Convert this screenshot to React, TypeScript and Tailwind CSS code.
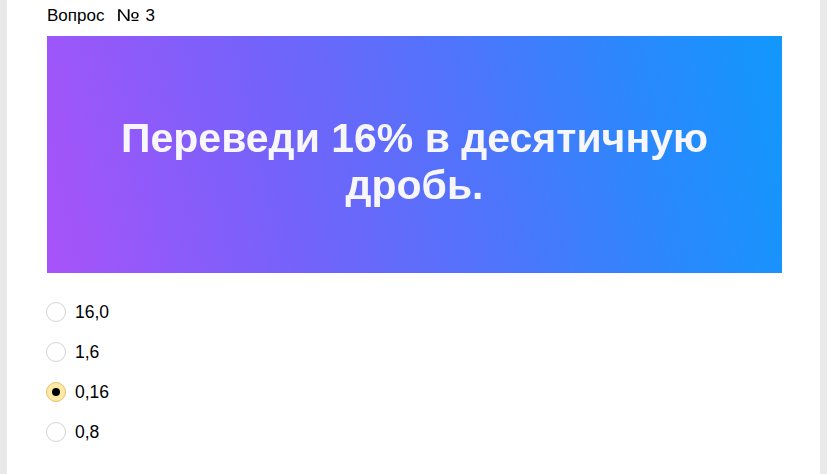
import React, { useState } from 'react';

const options = ['16,0', '1,6', '0,16', '0,8'];

const App: React.FC = () => {
  const [selected, setSelected] = useState(2);

  return (
    <div className="flex h-[474px] w-full bg-[#e9e9e9] font-['Liberation_Sans',Arial,sans-serif]">
      <div className="ml-[7px] h-full w-[813px] bg-white pl-[40px] pt-[5px]">
        <h1 className="h-[22px] text-[17px] leading-[22px] text-black">
          Вопрос
          <span className="ml-[12px] mr-[5px] inline-block w-[24px] leading-[22px]">
            <span className="inline-block origin-left scale-x-[1.3]">№</span>
          </span>
          3
        </h1>

        {/* question picture */}
        <div className="mt-[9px] flex h-[237px] w-[735px] items-center justify-center bg-[linear-gradient(78deg,#a853f9_0%,#7562fa_32%,#4f74fb_58%,#2b88fc_80%,#1198fd_100%)] pt-[14px]">
          <p className="text-center text-[41px] font-bold leading-[47px] text-[#f6f6fb] blur-[0.4px]">
            Переведи 16% в десятичную
            <br />
            дробь.
          </p>
        </div>

        <div className="mt-[19px] flex flex-col">
          {options.map((o, i) => (
            <label key={o} className="flex h-[40px] cursor-pointer items-center gap-[9px]" onClick={() => setSelected(i)}>
              <span
                className={
                  i === selected
                    ? 'ml-[-1px] flex h-[20px] w-[20px] items-center justify-center rounded-full border border-[#e2c46c] bg-[#fde8a6]'
                    : 'ml-[-1px] flex h-[20px] w-[20px] items-center justify-center rounded-full border border-[#d3d3d3] bg-white'
                }
              >
                {i === selected && <span className="h-[8px] w-[8px] rounded-full bg-black" />}
              </span>
              <span className="text-[17.5px] text-black">{o}</span>
            </label>
          ))}
        </div>
      </div>
    </div>
  );
};

export default App;
